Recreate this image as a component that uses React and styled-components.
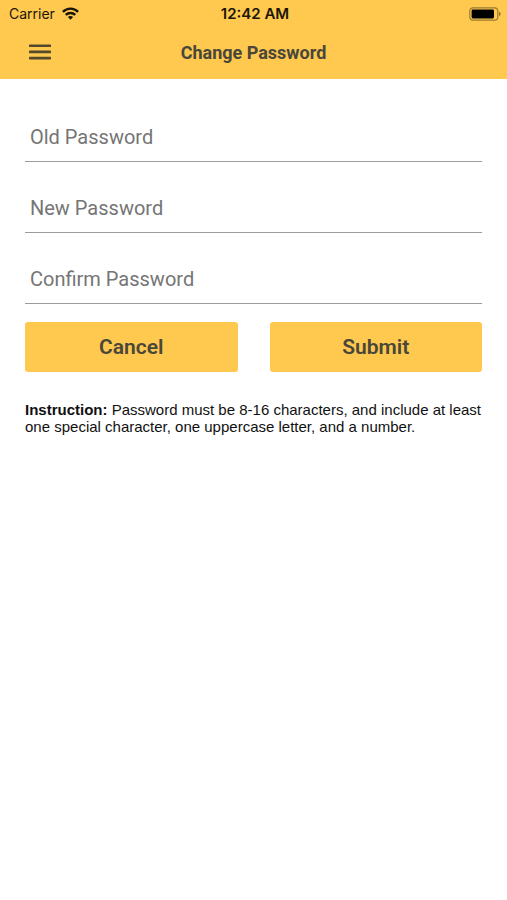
import React, { useState } from 'react';
import styled, { createGlobalStyle } from 'styled-components';

const GlobalStyle = createGlobalStyle`
  * {
    box-sizing: border-box;
  }

  body {
    margin: 0;
    background: #fff;
  }
`;

const Page = styled.div`
  width: 100%;
  min-height: 100vh;
  background: #fff;
  font-family: Roboto, sans-serif;
`;

const Header = styled.header`
  background: #ffc84e;
`;

const StatusBar = styled.div`
  display: grid;
  grid-template-columns: 1fr auto 1fr;
  align-items: center;
  height: 27px;
  padding: 0 6px 0 9px;
  color: #1a1508;
  font-family: Inter, sans-serif;
  font-size: 14px;
`;

const Carrier = styled.div`
  display: flex;
  align-items: center;
  gap: 7px;
`;

const Clock = styled.div`
  font-size: 15px;
  font-weight: 600;
`;

const BatterySlot = styled.div`
  display: flex;
  justify-content: flex-end;
`;

const NavBar = styled.div`
  display: grid;
  grid-template-columns: 32px 1fr 32px;
  align-items: center;
  height: 52px;
  padding: 0 24px;
`;

const MenuButton = styled.button`
  display: flex;
  align-items: center;
  justify-content: center;
  height: 32px;
  padding: 0;
  border: none;
  background: transparent;
  color: #54492d;
  cursor: pointer;
`;

const Title = styled.h1`
  margin: 0;
  color: #49463a;
  font-size: 18px;
  font-weight: 700;
  line-height: 24px;
  text-align: center;
`;

const Form = styled.form`
  padding: 33px 25px;
`;

const Fields = styled.div`
  display: flex;
  flex-direction: column;
  gap: 21px;
`;

const PasswordInput = styled.input`
  width: 100%;
  height: 50px;
  padding: 0 5px;
  border: none;
  border-bottom: 1px solid #9c9c9c;
  border-radius: 0;
  outline: none;
  background: transparent;
  color: #333;
  font-family: inherit;
  font-size: 20px;

  &::placeholder {
    color: #757575;
    opacity: 1;
  }

  &:focus {
    border-bottom-color: #ffc84e;
  }
`;

const Actions = styled.div`
  display: grid;
  grid-template-columns: 1fr 1fr;
  gap: 32px;
  margin-top: 18px;
`;

const ActionButton = styled.button`
  height: 50px;
  padding: 0;
  border: none;
  border-radius: 3px;
  background: #ffc84e;
  color: #49463a;
  font-family: inherit;
  font-size: 21px;
  font-weight: 600;
  cursor: pointer;
`;

const Instruction = styled.p`
  margin: 29px 0 0;
  color: #111;
  font-family: 'Liberation Sans', sans-serif;
  font-size: 15px;
  line-height: 17px;
`;

const WifiIcon = () => (
  <svg width="17" height="13" viewBox="0 0 17 13" fill="none" stroke="currentColor" strokeWidth="2.4" aria-hidden="true">
    <path d="M.9 4.8C5.2 .5 11.8 .5 16.1 4.8" />
    <path d="M3.7 7.9C6.4 5.3 10.6 5.3 13.3 7.9" />
    <path d="M8.5 12.8L5.9 10.1C7.4 8.7 9.6 8.7 11.1 10.1Z" fill="currentColor" stroke="none" />
  </svg>
);

const BatteryIcon = () => (
  <svg width="32" height="14" viewBox="0 0 32 14" aria-hidden="true">
    <rect x=".8" y=".8" width="28" height="12.4" rx="3.2" fill="none" stroke="#9a7a34" strokeWidth="1.2" />
    <rect x="2.6" y="2.6" width="22.4" height="8.8" rx="1.4" fill="#000" />
    <path d="M30 4.8C32.2 5.4 32.2 8.6 30 9.2Z" fill="#9a7a34" />
  </svg>
);

const MenuIcon = () => (
  <svg width="22" height="18" viewBox="0 0 22 18" fill="currentColor" aria-hidden="true">
    <rect y=".4" width="22" height="2.6" rx=".6" />
    <rect y="6.6" width="22" height="2.6" rx=".6" />
    <rect y="12.8" width="22" height="2.6" rx=".6" />
  </svg>
);

const fields = [
  { name: 'oldPassword', label: 'Old Password', autoComplete: 'current-password' },
  { name: 'newPassword', label: 'New Password', autoComplete: 'new-password' },
  { name: 'confirmPassword', label: 'Confirm Password', autoComplete: 'new-password' }
];

const emptyValues = { oldPassword: '', newPassword: '', confirmPassword: '' };

const ChangePasswordPage = () => {
  const [values, setValues] = useState(emptyValues);

  const handleChange = (e) => {
    setValues({ ...values, [e.target.name]: e.target.value });
  };

  return (
    <Page>
      <GlobalStyle />
      <Header>
        <StatusBar>
          <Carrier>
            Carrier
            <WifiIcon />
          </Carrier>
          <Clock>12:42 AM</Clock>
          <BatterySlot>
            <BatteryIcon />
          </BatterySlot>
        </StatusBar>
        <NavBar>
          <MenuButton type="button" aria-label="Menu">
            <MenuIcon />
          </MenuButton>
          <Title>Change Password</Title>
        </NavBar>
      </Header>

      <Form onSubmit={(e) => e.preventDefault()}>
        <Fields>
          {fields.map((field) => (
            <PasswordInput
              key={field.name}
              type="password"
              name={field.name}
              placeholder={field.label}
              aria-label={field.label}
              autoComplete={field.autoComplete}
              value={values[field.name]}
              onChange={handleChange}
            />
          ))}
        </Fields>

        <Actions>
          <ActionButton type="button" onClick={() => setValues(emptyValues)}>
            Cancel
          </ActionButton>
          <ActionButton type="submit">Submit</ActionButton>
        </Actions>

        <Instruction>
          <strong>Instruction:</strong> Password must be 8-16 characters, and include at least
          one special character, one uppercase letter, and a number.
        </Instruction>
      </Form>
    </Page>
  );
};

export default ChangePasswordPage;
